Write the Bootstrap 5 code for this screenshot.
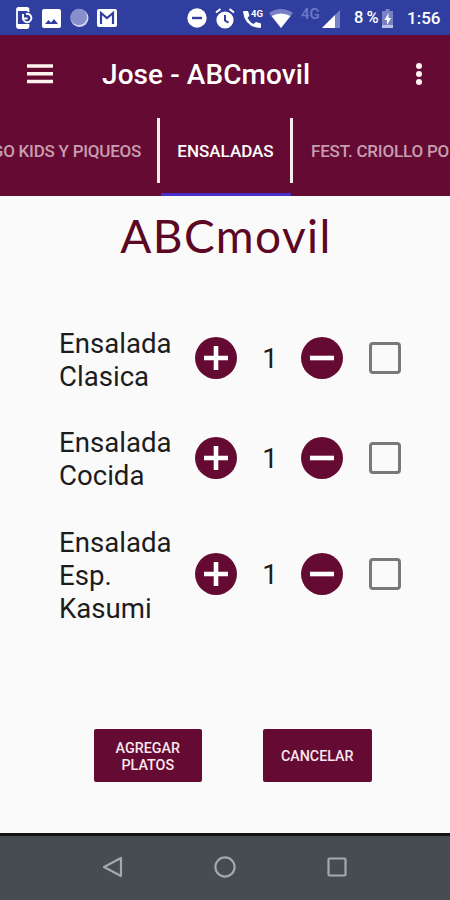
<!DOCTYPE html>
<html lang="es">
<head>
<meta charset="utf-8">
<meta name="viewport" content="width=device-width, initial-scale=1">
<title>ABCmovil</title>
<link href="https://cdn.jsdelivr.net/npm/bootstrap@5.3.0/dist/css/bootstrap.min.css" rel="stylesheet">
<style>
:root{--wine:#650a32}
body{font-family:Roboto,"Liberation Sans",sans-serif;background:#fafafa;color:#1c1c1c;width:450px;height:900px;overflow:hidden}
svg{display:block;flex:none}
.status{height:35px;background:#303f9f;color:#fff;display:grid;align-items:center;
 grid-template-columns:16px 26px 28px 27px 90px 28px 28px 26px 32px 21px 32px 28px 25px 43px;white-space:nowrap;font-size:17px;font-weight:500;line-height:36px}
.status .net{font-size:15px;color:#6e7ac2;line-height:29px;align-self:start}
.status .pct{word-spacing:-1px;font-size:16.5px}
.appbar{height:84px;background:var(--wine);color:#fff;padding:0 27px 6px 27px}
.appbar h1{font-size:28px;font-weight:500;margin:1px 0 0 49px;letter-spacing:.08px;line-height:34px}
.tabs{height:77px;background:var(--wine);position:relative}
.tabs .tab{font-size:17px;font-weight:500;color:#c79db0;height:65px;line-height:65px;white-space:nowrap;flex:none}
.tabs .tab.active{color:#fff;width:130px;padding-left:1px;text-align:center}
.tabs .prev{width:157px;padding-right:16px;display:flex;justify-content:flex-end;overflow:hidden;letter-spacing:-.25px}
.tabs .next{width:156px;padding-left:18px;overflow:hidden;letter-spacing:-.2px}
.sep{width:3px;height:65px;margin-top:-1px;background:#f5eee8;flex:none}
.indicator{width:130px;height:3px;margin-left:161px;background:#4530c8;position:absolute;bottom:0}
.brand{font-family:Lato,"Noto Sans",sans-serif;font-size:46px;line-height:56px;color:#5c0824;margin-top:12px;padding-left:2px;letter-spacing:1.4px}
.dishes{padding:61px 0 0 59px;gap:33.5px}
.dish{display:grid;grid-template-columns:136.4px 42px 64px 42px 26px 32px;align-items:center;font-size:27.6px;line-height:33px}
.dish .dish-name{margin:1.5px 0 -1.5px}
.dish .qty{padding:1px 0 0 1px}
.round{width:42px;height:42px;border:0;padding:0;background:none}
.dish .form-check-input{width:32px;height:32px;margin:0;border:3px solid #797979;border-radius:4px;background:#fafafa}
.actions{padding:105.5px 78.5px 0 93.5px}
.actions .btn{width:108.5px;height:53px;background:var(--wine);color:#f8e8ee;border:0;border-radius:2px;padding:3px 0 0;font-size:14.3px;font-weight:500;line-height:16.5px}
.navkeys{height:67px;background:#454c52;border-top:3px solid #101214;padding-bottom:2px}
.navkeys svg{margin:0 45.2px}
</style>
<script src="https://cdn.jsdelivr.net/npm/bootstrap@5.3.0/dist/js/bootstrap.bundle.min.js"></script>
</head>
<body class="d-flex flex-column">
<header>
 <div class="status">
  <span></span>
  <svg width="17" height="22" viewBox="0 0 17 22"><path d="M12.500 5V2.500q0-1.500-1.500-1.500H2.500Q1 1 1 2.500v17Q1 21 2.500 21H11q1.500 0 1.500-1.500V17" fill="none" stroke="#fff" stroke-width="1.800"/><path d="M1 1h11v3H1zM1 17h11v4H1z" fill="#fff"/><path d="M7 7v4.500h4.500M7 11a4.200 4.200 0 1 0 3-4" fill="none" stroke="#fff" stroke-width="1.900"/></svg>
  <svg width="19" height="19" viewBox="0 0 19 19"><rect width="19" height="19" rx="2" fill="#fff"/><path d="M3 15l3.500-4 2.500 2.500 3-3.500 4 5z" fill="#303f9f"/></svg>
  <svg width="19" height="20" viewBox="0 0 19 20"><circle cx="9.500" cy="10" r="9" fill="#d7daf0"/><circle cx="8.800" cy="9" r="8.300" fill="#8790cc"/></svg>
  <svg width="20" height="18" viewBox="0 0 20 18"><rect width="20" height="18" rx="2" fill="#fff"/><path d="M4 15V4l6 5 6-5v11" fill="none" stroke="#303f9f" stroke-width="2.200"/></svg>
  <svg width="20" height="20" viewBox="0 0 20 20"><circle cx="10" cy="10" r="9.700" fill="#fff"/><path d="M5 8.800h10v2.400H5z" fill="#303f9f"/></svg>
  <svg width="20" height="21" viewBox="0 0 20 21"><circle cx="10" cy="12" r="8.600" fill="#fff"/><path d="M1 4.500L5.500 1M19 4.500L14.500 1" stroke="#fff" stroke-width="2"/><path d="M10 7v5.500l3.500 2.200" stroke="#303f9f" stroke-width="2" fill="none"/></svg>
  <svg width="21" height="21" viewBox="0 0 21 21"><path d="M1 3h4l1.500 4.500-2 2.500q2 4 6 6l2.500-2L18 15.500V19q0 1-1 1Q2 19 0 4q0-1 1-1z" fill="#fff"/><text x="8" y="9" font-size="9.500" font-weight="700" fill="#fff">4G</text></svg>
  <svg width="24" height="19" viewBox="0 0 24 19"><path d="M0 4Q12-4 24 4L12 19z" fill="#7781c4"/><path d="M2.500 7Q12 2 21.500 7L12 19z" fill="#fff"/></svg>
  <span class="net">4G</span>
  <svg width="18" height="19" viewBox="0 0 18 19"><path d="M0 19L18 1v18z" fill="#7781c4"/><path d="M0 19L13 6v13z" fill="#fff"/></svg>
  <span class="pct">8 %</span>
  <svg width="11" height="19" viewBox="0 0 11 19"><path d="M3.500 0h4v2H11v17H0V2h3.500z" fill="#7781c4"/><path d="M0 16h11v3H0z" fill="#bcc1e4"/><path d="M6.500 4L2.500 11h2.500v5l4-7H6.500z" fill="#fff"/></svg>
  <span>1:56</span>
 </div>
 <nav class="appbar d-flex align-items-center">
  <svg width="26" height="20" viewBox="0 0 26 20"><path d="M0 2h26M0 9.700h26M0 17.500h26" stroke="#fff4ee" stroke-width="3.400"/></svg>
  <h1>Jose - ABCmovil</h1>
  <svg class="ms-auto" width="8" height="24" viewBox="0 0 8 24"><g fill="#fff4ee"><circle cx="4" cy="4" r="3"/><circle cx="4" cy="12" r="3"/><circle cx="4" cy="20" r="3"/></g></svg>
 </nav>
 <nav class="tabs">
  <div class="d-flex">
   <div class="tab prev"><span>GO KIDS Y PIQUEOS</span></div><i class="sep"></i>
   <div class="tab active">ENSALADAS</div><i class="sep"></i>
   <div class="tab next">FEST. CRIOLLO PO</div>
  </div>
  <div class="indicator"></div>
 </nav>
</header>
<main class="flex-grow-1">
 <div class="brand text-center">ABCmovil</div>
 <div class="dishes d-flex flex-column">
  <div class="dish">
   <div class="dish-name">Ensalada<br>Clasica</div>
   <button class="round" aria-label="Agregar"><svg width="42" height="42" viewBox="0 0 42 42"><circle cx="21" cy="21" r="21" fill="#650a32"/><path d="M9 21h24M21 9v24" stroke="#fff" stroke-width="4.600"/></svg></button>
   <div class="qty text-center">1</div>
   <button class="round" aria-label="Quitar"><svg width="42" height="42" viewBox="0 0 42 42"><circle cx="21" cy="21" r="21" fill="#650a32"/><path d="M9 21h24" stroke="#fff" stroke-width="4.600"/></svg></button>
   <span></span><input class="form-check-input" type="checkbox">
  </div>
  <div class="dish">
   <div class="dish-name">Ensalada<br>Cocida</div>
   <button class="round" aria-label="Agregar"><svg width="42" height="42" viewBox="0 0 42 42"><circle cx="21" cy="21" r="21" fill="#650a32"/><path d="M9 21h24M21 9v24" stroke="#fff" stroke-width="4.600"/></svg></button>
   <div class="qty text-center">1</div>
   <button class="round" aria-label="Quitar"><svg width="42" height="42" viewBox="0 0 42 42"><circle cx="21" cy="21" r="21" fill="#650a32"/><path d="M9 21h24" stroke="#fff" stroke-width="4.600"/></svg></button>
   <span></span><input class="form-check-input" type="checkbox">
  </div>
  <div class="dish">
   <div class="dish-name">Ensalada<br>Esp.<br>Kasumi</div>
   <button class="round" aria-label="Agregar"><svg width="42" height="42" viewBox="0 0 42 42"><circle cx="21" cy="21" r="21" fill="#650a32"/><path d="M9 21h24M21 9v24" stroke="#fff" stroke-width="4.600"/></svg></button>
   <div class="qty text-center">1</div>
   <button class="round" aria-label="Quitar"><svg width="42" height="42" viewBox="0 0 42 42"><circle cx="21" cy="21" r="21" fill="#650a32"/><path d="M9 21h24" stroke="#fff" stroke-width="4.600"/></svg></button>
   <span></span><input class="form-check-input" type="checkbox">
  </div>
 </div>
 <div class="actions d-flex justify-content-between">
  <button class="btn">AGREGAR<br>PLATOS</button>
  <button class="btn">CANCELAR</button>
 </div>
</main>
<footer class="navkeys d-flex justify-content-center align-items-center">
 <svg width="22" height="22" viewBox="0 0 22 22"><path d="M19 2v18L2 11z" fill="none" stroke="#a3a9ad" stroke-width="2.200" stroke-linejoin="round"/></svg>
 <svg width="22" height="22" viewBox="0 0 22 22"><circle cx="11" cy="11" r="9.600" fill="none" stroke="#a3a9ad" stroke-width="2.200"/></svg>
 <svg width="22" height="22" viewBox="0 0 22 22"><rect x="2.500" y="2.500" width="17" height="17" rx="1" fill="none" stroke="#a3a9ad" stroke-width="2.200"/></svg>
</footer>
</body>
</html>
